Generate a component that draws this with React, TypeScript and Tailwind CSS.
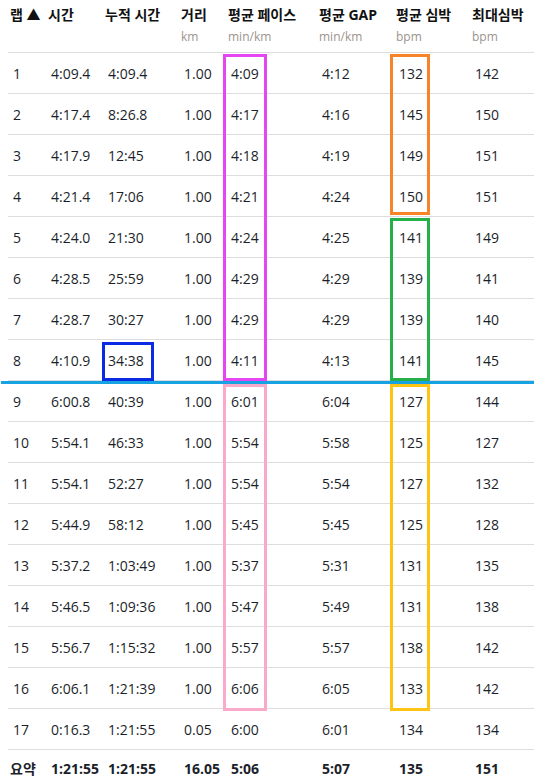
const cols = [
  { label: "랩 ▲", unit: "", w: "w-[38px]" },
  { label: "시간", unit: "", w: "w-[57px]" },
  { label: "누적 시간", unit: "", w: "w-[76px]" },
  { label: "거리", unit: "km", w: "w-[47px]" },
  { label: "평균 페이스", unit: "min/km", w: "w-[91px]" },
  { label: "평균 GAP", unit: "min/km", w: "w-[77px]" },
  { label: "평균 심박", unit: "bpm", w: "w-[76px]" },
  { label: "최대심박", unit: "bpm", w: "w-[64px]" },
]

const laps = [
  ["1", "4:09.4", "4:09.4", "1.00", "4:09", "4:12", "132", "142"],
  ["2", "4:17.4", "8:26.8", "1.00", "4:17", "4:16", "145", "150"],
  ["3", "4:17.9", "12:45", "1.00", "4:18", "4:19", "149", "151"],
  ["4", "4:21.4", "17:06", "1.00", "4:21", "4:24", "150", "151"],
  ["5", "4:24.0", "21:30", "1.00", "4:24", "4:25", "141", "149"],
  ["6", "4:28.5", "25:59", "1.00", "4:29", "4:29", "139", "141"],
  ["7", "4:28.7", "30:27", "1.00", "4:29", "4:29", "139", "140"],
  ["8", "4:10.9", "34:38", "1.00", "4:11", "4:13", "141", "145"],
  ["9", "6:00.8", "40:39", "1.00", "6:01", "6:04", "127", "144"],
  ["10", "5:54.1", "46:33", "1.00", "5:54", "5:58", "125", "127"],
  ["11", "5:54.1", "52:27", "1.00", "5:54", "5:54", "127", "132"],
  ["12", "5:44.9", "58:12", "1.00", "5:45", "5:45", "125", "128"],
  ["13", "5:37.2", "1:03:49", "1.00", "5:37", "5:31", "131", "135"],
  ["14", "5:46.5", "1:09:36", "1.00", "5:47", "5:49", "131", "138"],
  ["15", "5:56.7", "1:15:32", "1.00", "5:57", "5:57", "138", "142"],
  ["16", "6:06.1", "1:21:39", "1.00", "6:06", "6:05", "133", "142"],
  ["17", "0:16.3", "1:21:55", "0.05", "6:00", "6:01", "134", "134"],
]

const summary = ["요약", "1:21:55", "1:21:55", "16.05", "5:06", "5:07", "135", "151"]

export default function App() {
  return (
    <div className="relative w-[534px] h-[784px] overflow-hidden bg-white pl-2 font-['Open_Sans','Noto_Sans_CJK_KR',sans-serif] text-[14px] text-[#1c1f2a]">
      {/* Header */}
      <div className="flex h-[53px] border-b border-[#dddddd]">
        {cols.map((c) => (
          <div key={c.label} className={`${c.w} shrink-0 pl-[2px] pt-[5px]`}>
            <div className="h-[20px] leading-[20px] font-bold text-[#111] whitespace-nowrap">
              {c.label}
            </div>
            <div className="mt-[4px] h-[16px] leading-[16px] text-[12px] text-[#9c948e]">
              {c.unit}
            </div>
          </div>
        ))}
      </div>

      {/* Laps */}
      {laps.map((row) => (
        <div key={row[0]} className="flex h-[41px] items-center border-b border-[#dddddd]">
          {row.map((v, i) => (
            <div key={i} className={`${cols[i].w} shrink-0 pl-[5px] whitespace-nowrap`}>
              {v}
            </div>
          ))}
        </div>
      ))}

      {/* Summary */}
      <div className="flex h-[36px] items-center font-bold">
        {summary.map((v, i) => (
          <div
            key={i}
            className={`${cols[i].w} shrink-0 whitespace-nowrap ${i === 0 ? "pl-[2px]" : "pl-[5px]"}`}
          >
            {v}
          </div>
        ))}
      </div>

      {/* Annotations */}
      <div className="absolute left-[1px] right-0 top-[381px] h-[3px] bg-[#17a3e2]" />
      <div className="absolute left-[223px] top-[54px] w-[44px] h-[327px] border-[3px] border-[#e645f2]" />
      <div className="absolute left-[223px] top-[384px] w-[44px] h-[327px] border-[3px] border-[#f9a9c9]" />
      <div className="absolute left-[390px] top-[54px] w-[40px] h-[161px] border-[3px] border-[#f8842a]" />
      <div className="absolute left-[390px] top-[218px] w-[40px] h-[163px] border-[3px] border-[#26b04a]" />
      <div className="absolute left-[390px] top-[384px] w-[40px] h-[327px] border-[3px] border-[#fdc414]" />
      <div className="absolute left-[102px] top-[342px] w-[52px] h-[39px] border-[3px] border-[#0a2be3]" />
    </div>
  )
}
